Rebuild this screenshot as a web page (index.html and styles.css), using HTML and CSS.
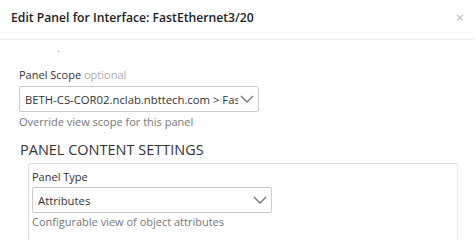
FILE: index.html
```html
<!DOCTYPE html>
<html lang="en">
<head>
    <meta charset="UTF-8">
    <title>Edit Panel</title>
    <link rel="stylesheet" href="styles.css">
</head>
<body>
    <div class="modal">
        <div class="modal-header">
            <div class="modal-title">Edit Panel for Interface: FastEthernet3/20</div>
            <span class="close">&times;</span>
        </div>
        <div class="modal-body">
            <div class="stray-dot"></div>
            <div class="field">
                <label class="field-label">Panel Scope <span class="optional">optional</span></label>
                <div class="select scope-select">
                    <span class="select-text">BETH-CS-COR02.nclab.nbttech.com &gt; FastEthernet3/20</span>
                    <svg class="chevron" width="14" height="8" viewBox="0 0 14 8"><path d="M1 1 L7 7 L13 1" fill="none" stroke="#777" stroke-width="1.4"/></svg>
                </div>
                <div class="help">Override view scope for this panel</div>
            </div>
            <h3 class="section-title">PANEL CONTENT SETTINGS</h3>
            <div class="section-box">
                <div class="field">
                    <label class="field-label">Panel Type</label>
                    <div class="select">
                        <span class="select-text">Attributes</span>
                        <svg class="chevron" width="14" height="8" viewBox="0 0 14 8"><path d="M1 1 L7 7 L13 1" fill="none" stroke="#777" stroke-width="1.4"/></svg>
                    </div>
                    <div class="help">Configurable view of object attributes</div>
                </div>
            </div>
        </div>
    </div>
</body>
</html>
```

FILE: styles.css
```css
body {
    margin: 0;
    font-family: 'Open Sans', 'Liberation Sans', sans-serif;
    background-color: #fff;
    color: #333;
    overflow: hidden;
}
.modal {
    width: 473px;
    height: 240px;
    overflow: hidden;
}
.modal-header {
    display: flex;
    align-items: center;
    justify-content: space-between;
    padding: 0 11px;
    border-bottom: 1px dotted #ddd;
    box-sizing: border-box;
    height: 40px;
}
.modal-title {
    font-size: 12.2px;
    font-weight: 600;
    color: #222;
    margin-top: -4px;
}
.close {
    color: #bbb;
    font-size: 15px;
    line-height: 1;
    margin-top: -5px;
    margin-right: -2px;
}
.modal-body {
    padding: 0 0 0 19px;
}
.stray-dot {
    width: 1px;
    height: 1px;
    background: #999;
    margin: 11px 0 0 39px;
}
.field {
    display: flex;
    flex-direction: column;
}
.field-label {
    font-size: 11px;
    line-height: 15px;
    margin-top: 15px;
    margin-bottom: 4px;
    color: #333;
}
.optional {
    color: #aaa;
}
.select {
    width: 240px;
    height: 26px;
    box-sizing: border-box;
    border: 1px solid #ccc;
    border-radius: 2px;
    display: flex;
    align-items: center;
    padding: 0 4px 0 5px;
    gap: 2px;
}
.select-text {
    flex: 1;
    min-width: 0;
    font-size: 11.3px;
    white-space: nowrap;
    overflow: hidden;
    color: #333;
}
.chevron {
    flex: none;
}
.help {
    font-size: 11px;
    line-height: 15px;
    margin-top: 2px;
    color: #777;
}
.section-title {
    font-size: 14.5px;
    font-weight: 400;
    color: #333;
    margin: 11px 0 0 1px;
    line-height: 20px;
}
.section-box {
    margin: 3px 0 0 9px;
    width: 425px;
    height: 90px;
    border: 1px solid #ddd;
    border-right-style: dotted;
    border-bottom: none;
    border-radius: 3px 3px 0 0;
    padding-left: 3px;
}
.section-box .field-label {
    margin-top: 5px;
    margin-bottom: 3px;
}
.section-box .help {
    margin-top: 1px;
}
```
